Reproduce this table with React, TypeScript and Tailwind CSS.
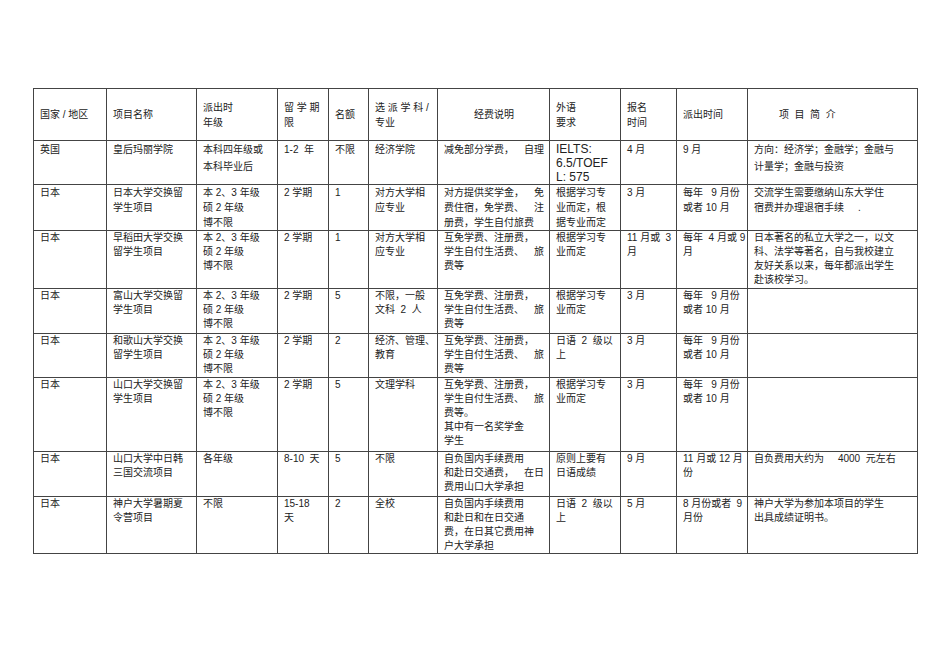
import * as React from "react";

type Cell = string[] | { lines: string[]; cls: string; line?: string };

const cols = [73, 90, 81, 51, 40, 69, 112, 71, 56, 71, 170];

const L14 = "h-[14px] leading-[14px]";
const L15 = "h-[15px] leading-[15px]";
const L17 = "h-[17px] leading-[17px]";

const header: Cell[] = [
  ["国家 / 地区"],
  ["项目名称"],
  ["派出时", "年级"],
  ["留 学 期", "限"],
  ["名额"],
  ["选 派 学 科 /", "专业"],
  { lines: ["经费说明"], cls: "text-center" },
  ["外语", "要求"],
  ["报名", "时间"],
  ["派出时间"],
  { lines: ["项  目  简  介"], cls: "pl-[31px]" },
];

const benShuo = ["本 2、3 年级", "硕 2 年级", "博不限"];
const huMian = ["互免学费、注册费，", "学生自付生活费、|旅", "费等"];
const meiNian = ["每年   9 月份", "或者 10 月"];

const rows: { h: number; line: string; cells: Cell[] }[] = [
  {
    h: 44,
    line: L17,
    cells: [
      ["英国"],
      ["皇后玛丽学院"],
      ["本科四年级或", "本科毕业后"],
      ["1-2  年"],
      ["不限"],
      ["经济学院"],
      ["减免部分学费，|自理"],
      { lines: ["IELTS:", "6.5/TOEF", "L: 575"], cls: "text-[12px] pt-[1px]", line: L14 },
      ["4 月"],
      ["9 月"],
      ["方向：经济学；金融学；金融与", "计量学；金融与投资"],
    ],
  },
  {
    h: 46,
    line: L15,
    cells: [
      ["日本"],
      ["日本大学交换留", "学生项目"],
      benShuo,
      ["2 学期"],
      ["1"],
      ["对方大学相", "应专业"],
      ["对方提供奖学金，|免", "费住宿，免学费、|注", "册费，学生自付旅费"],
      ["根据学习专", "业而定，根", "据专业而定"],
      ["3 月"],
      meiNian,
      ["交流学生需要缴纳山东大学住", "宿费并办理退宿手续     ."],
    ],
  },
  {
    h: 58,
    line: L14,
    cells: [
      ["日本"],
      ["早稻田大学交换", "留学生项目"],
      benShuo,
      ["2 学期"],
      ["1"],
      ["对方大学相", "应专业"],
      huMian,
      ["根据学习专", "业而定"],
      ["11 月或|3", "月"],
      ["每年  4 月或 |9", "月"],
      ["日本著名的私立大学之一，以文", "科、法学等著名，自与我校建立", "友好关系以来，每年都派出学生", "赴该校学习。"],
    ],
  },
  {
    h: 45,
    line: L14,
    cells: [
      ["日本"],
      ["富山大学交换留", "学生项目"],
      benShuo,
      ["2 学期"],
      ["5"],
      ["不限，一般", "文科  2  人"],
      huMian,
      ["根据学习专", "业而定"],
      ["3 月"],
      meiNian,
      [],
    ],
  },
  {
    h: 44,
    line: L14,
    cells: [
      ["日本"],
      ["和歌山大学交换", "留学生项目"],
      benShuo,
      ["2 学期"],
      ["2"],
      ["经济、管理、", "教育"],
      huMian,
      ["日语  2  级以", "上"],
      ["3 月"],
      meiNian,
      [],
    ],
  },
  {
    h: 74,
    line: L14,
    cells: [
      ["日本"],
      ["山口大学交换留", "学生项目"],
      benShuo,
      ["2 学期"],
      ["5"],
      ["文理学科"],
      ["互免学费、注册费，", "学生自付生活费、|旅", "费等。", "其中有一名奖学金", "学生"],
      ["根据学习专", "业而定"],
      ["3 月"],
      meiNian,
      [],
    ],
  },
  {
    h: 45,
    line: L14,
    cells: [
      ["日本"],
      ["山口大学中日韩", "三国交流项目"],
      ["各年级"],
      ["8-10  天"],
      ["5"],
      ["不限"],
      ["自负国内手续费用", "和赴日交通费，|在日", "费用山口大学承担"],
      ["原则上要有", "日语成绩"],
      ["9 月"],
      ["11 月或 12 月", "份"],
      ["自负费用大约为     4000  元左右"],
    ],
  },
  {
    h: 57,
    line: L14,
    cells: [
      ["日本"],
      ["神户大学暑期夏", "令营项目"],
      ["不限"],
      ["15-18", "天"],
      ["2"],
      ["全校"],
      ["自负国内手续费用", "和赴日和在日交通", "费，在日其它费用神", "户大学承担"],
      ["日语  2  级以", "上"],
      ["5 月"],
      ["8 月份或者|9", "月份"],
      ["神户大学为参加本项目的学生", "出具成绩证明书。"],
    ],
  },
];

function Lines({ lines, line }: { lines: string[]; line: string }) {
  return (
    <>
      {lines.map((l, i) =>
        l.includes("|") ? (
          <div key={i} className={`flex justify-between whitespace-pre ${line}`}>
            {l.split("|").map((s, j) => (
              <span key={j}>{s}</span>
            ))}
          </div>
        ) : (
          <div key={i} className={`whitespace-pre ${line}`}>
            {l}
          </div>
        )
      )}
    </>
  );
}

function Td({ cell, extra, line }: { cell: Cell; extra: string; line: string }) {
  const lines = Array.isArray(cell) ? cell : cell.lines;
  const cls = Array.isArray(cell) ? "" : cell.cls;
  const ln = Array.isArray(cell) ? line : cell.line ?? line;
  return (
    <td className={`border border-[#444] pl-[6px] pr-[5px] overflow-hidden ${extra} ${cls}`}>
      <Lines lines={lines} line={ln} />
    </td>
  );
}

export default function App() {
  return (
    <div
      className="w-[950px] h-[672px] bg-white pt-[88px] pl-[33px] text-[10px] text-[#222]"
      style={{ fontFamily: '"Liberation Sans", "Noto Sans CJK SC", sans-serif' }}
    >
      <table className="table-fixed border-collapse w-[884px]">
        <colgroup>
          {cols.map((w, i) => (
            <col key={i} style={{ width: w }} />
          ))}
        </colgroup>
        <tbody>
          <tr className="h-[52px]">
            {header.map((c, i) => (
              <Td key={i} cell={c} extra="align-middle" line={L15} />
            ))}
          </tr>
          {rows.map((r, i) => (
            <tr key={i} style={{ height: r.h }}>
              {r.cells.map((c, j) => (
                <Td key={j} cell={c} extra="align-top pt-0" line={r.line} />
              ))}
            </tr>
          ))}
        </tbody>
      </table>
    </div>
  );
}
